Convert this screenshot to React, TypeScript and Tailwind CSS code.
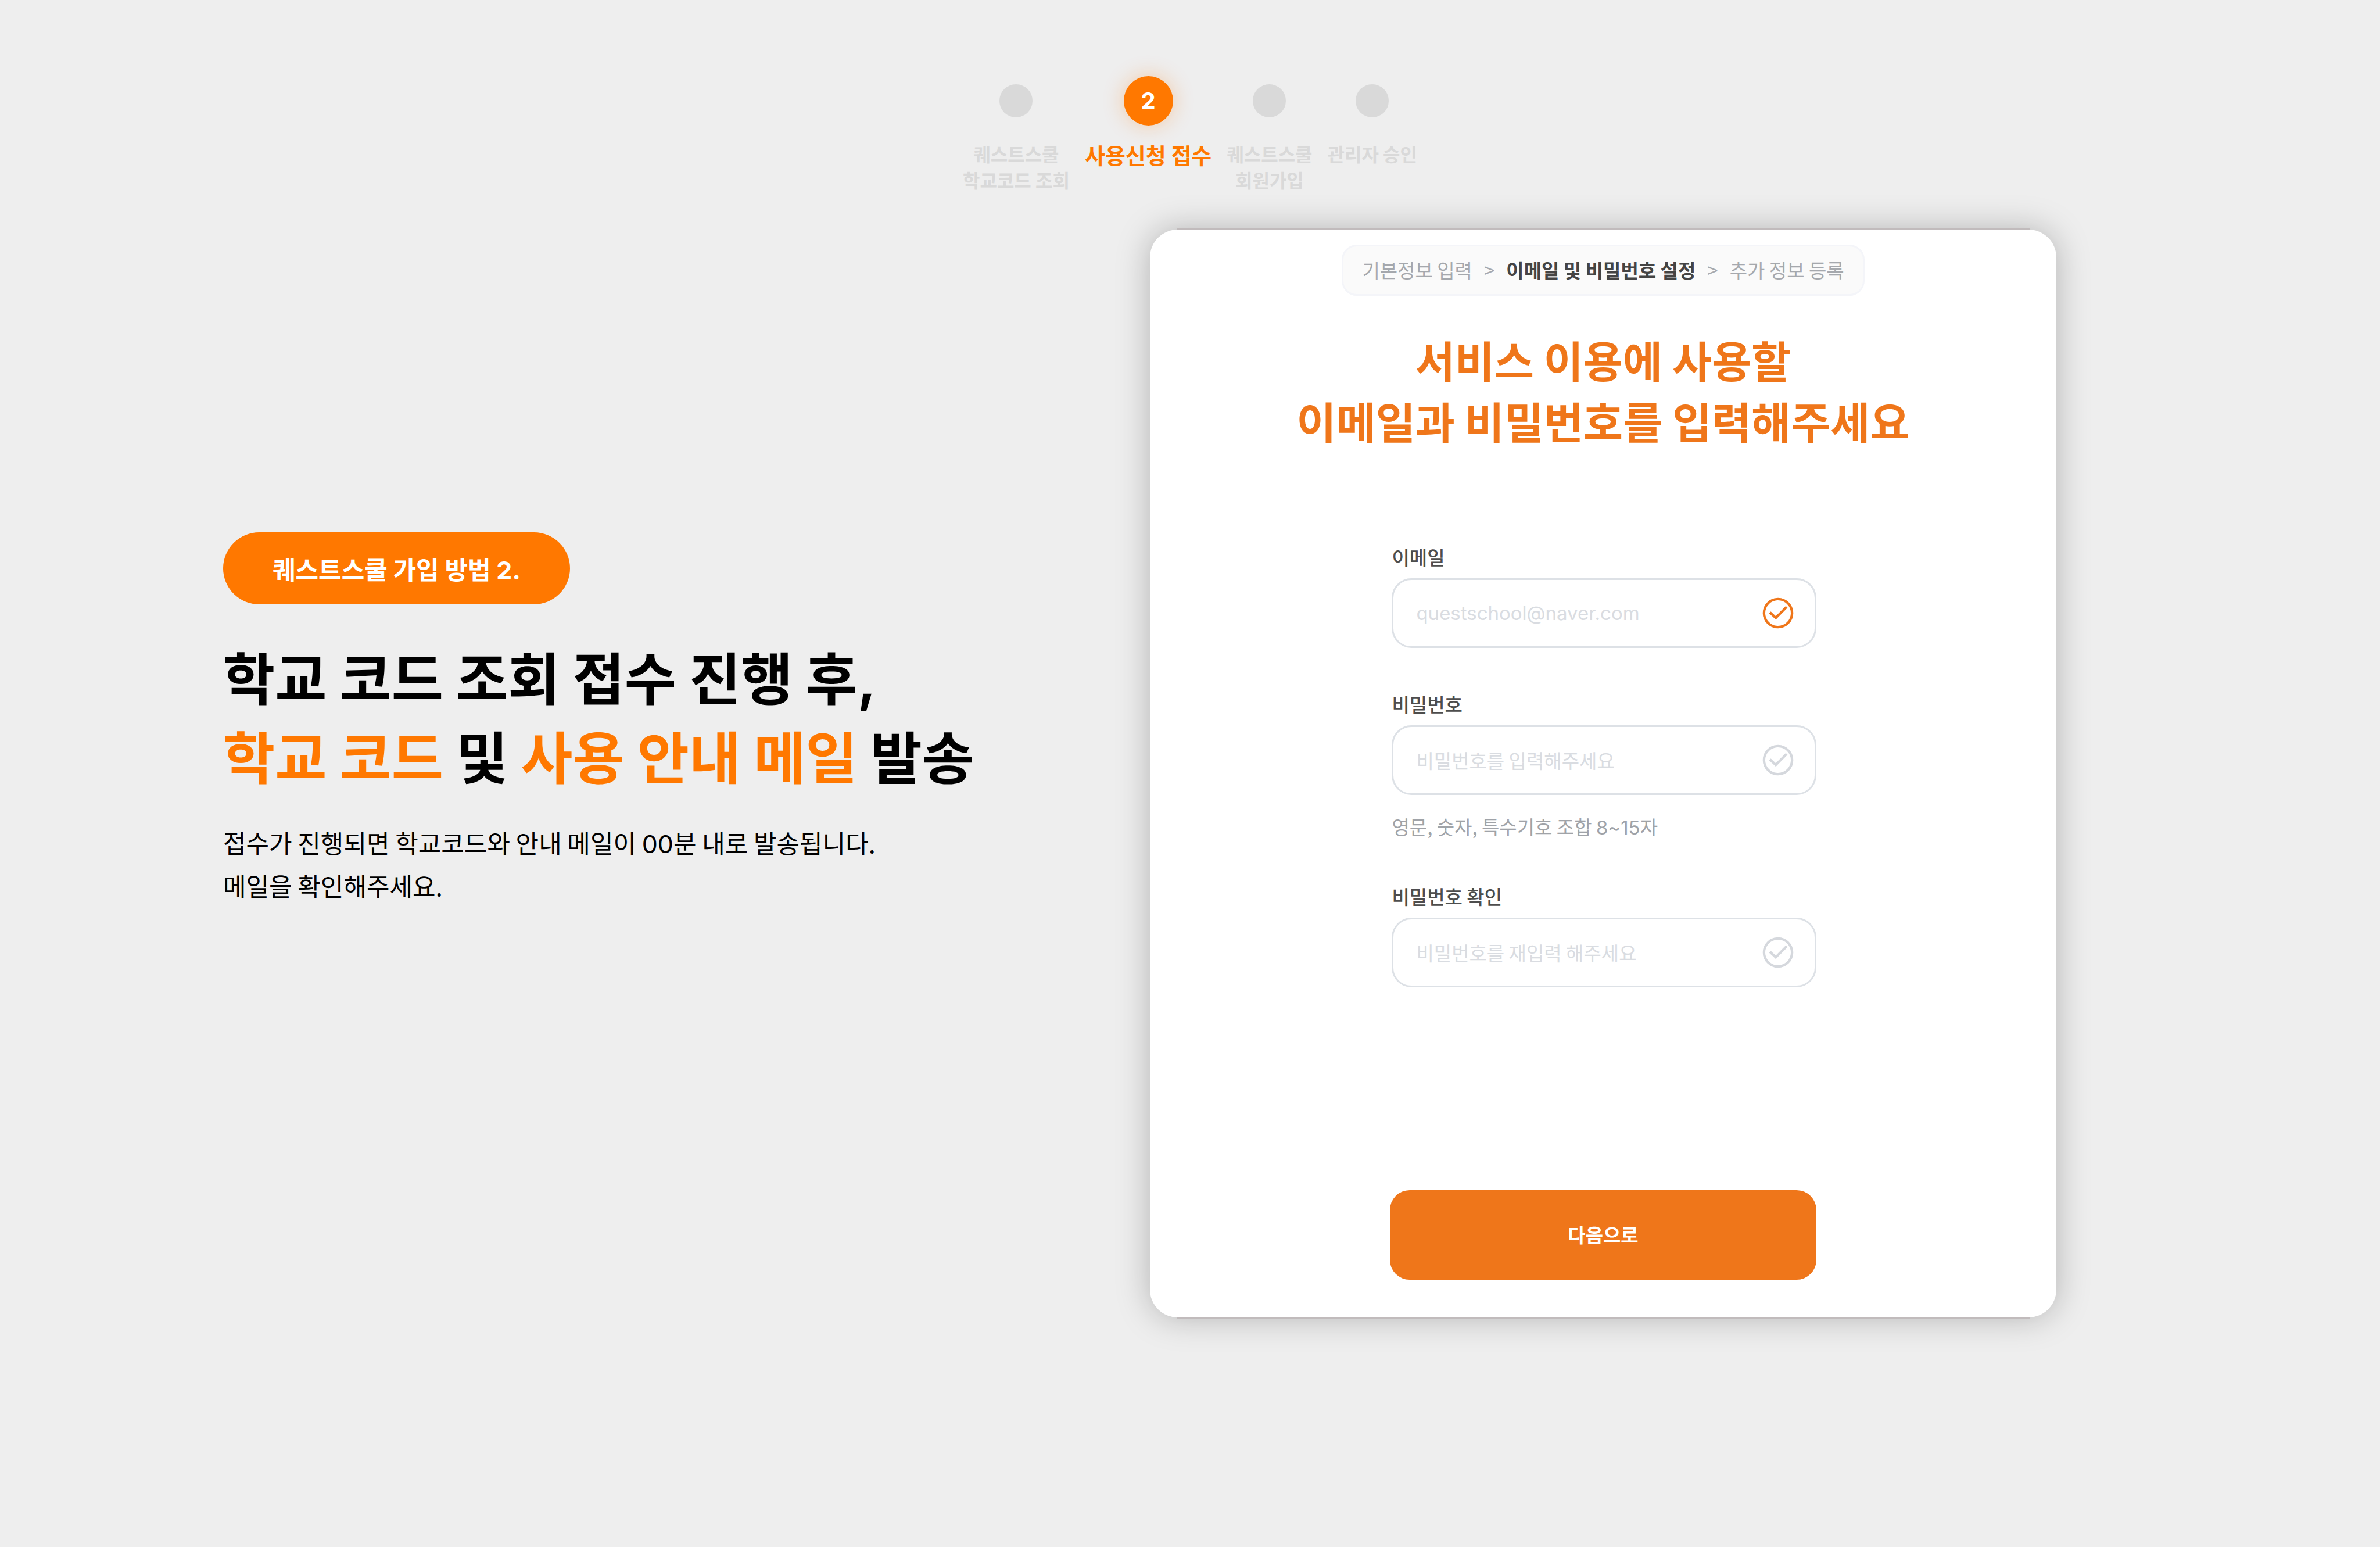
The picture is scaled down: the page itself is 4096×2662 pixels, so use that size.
import React from "react";

type Step = { lines: string[]; active?: boolean; number: number };

const steps: Step[] = [
  { number: 1, lines: ["퀘스트스쿨", "학교코드 조회"] },
  { number: 2, lines: ["사용신청 접수"], active: true },
  { number: 3, lines: ["퀘스트스쿨", "회원가입"] },
  { number: 4, lines: ["관리자 승인"] },
];

type FieldProps = {
  id: string;
  label: string;
  type: string;
  placeholder: string;
  hint?: React.ReactNode;
  valid?: boolean;
};

function Latin({ children }: { children: React.ReactNode }) {
  return <span className="font-['Inter'] leading-none">{children}</span>;
}

const fields: FieldProps[] = [
  { id: "email", label: "이메일", type: "email", placeholder: "questschool@naver.com", valid: true },
  {
    id: "password",
    label: "비밀번호",
    type: "password",
    placeholder: "비밀번호를 입력해주세요",
    hint: (
      <>
        영문, 숫자, 특수기호 조합 <Latin>8~15</Latin>자
      </>
    ),
  },
  { id: "password-confirm", label: "비밀번호 확인", type: "password", placeholder: "비밀번호를 재입력 해주세요" },
];

function StepItem({ step }: { step: Step }) {
  return (
    <li className="flex flex-col items-center gap-[26px]" aria-current={step.active ? "step" : undefined}>
      <div className="flex h-[85px] items-center justify-center">
        {step.active ? (
          <span className="flex size-[85px] items-center justify-center rounded-full bg-[#ff7800] font-['Inter'] text-[40px] font-bold text-white shadow-[0_0_36px_rgba(255,120,0,0.3)]">
            {step.number}
          </span>
        ) : (
          <span className="size-[57px] rounded-full bg-[#d9d9d9]" />
        )}
      </div>
      <p
        className={
          step.active
            ? "text-center text-[38px] leading-[48px] font-bold text-[#ff7800]"
            : "text-center text-[32px] leading-[45px] font-bold text-[#d9d9d9]"
        }
      >
        {step.lines.map((line) => (
          <span key={line} className="block whitespace-nowrap">
            {line}
          </span>
        ))}
      </p>
    </li>
  );
}

function CheckCircle({ className }: { className: string }) {
  return (
    <svg viewBox="0 0 76 76" fill="none" stroke="currentColor" strokeWidth="6" className={className} aria-hidden="true">
      <circle cx="38" cy="38" r="34" />
      <path d="M18.5 36.5 L32.5 49.5 L59 23" />
    </svg>
  );
}

function Field({ id, label, type, placeholder, hint, valid }: FieldProps) {
  return (
    <div className="flex flex-col">
      <label htmlFor={id} className="text-[33px] leading-[48px] font-medium text-[#4d4d4d]">
        {label}
      </label>
      <div className="relative mt-[13px]">
        <input
          id={id}
          type={type}
          placeholder={placeholder}
          className={
            type === "email"
              ? "h-[120px] w-full rounded-[34px] border-3 border-[#dde1e6] bg-white pr-[120px] pl-[39px] font-['Inter'] text-[33px] text-[#444444] outline-none placeholder:text-[#d9dce1]"
              : "h-[120px] w-full rounded-[34px] border-3 border-[#dde1e6] bg-white pr-[120px] pl-[39px] text-[33px] text-[#444444] outline-none placeholder:text-[#d9dce1]"
          }
        />
        <CheckCircle
          className={
            valid
              ? "absolute top-[33px] right-[39px] size-[54px] text-[#ef761a]"
              : "absolute top-[33px] right-[39px] size-[54px] text-[#d5d8dd]"
          }
        />
      </div>
      {hint && <p className="mt-[30px] text-[33px] leading-[48px] text-[#a0a3a8]">{hint}</p>}
    </div>
  );
}

export default function App() {
  return (
    <div className="flex min-h-screen flex-col bg-[#eeeeee] pt-[131px] font-['Noto_Sans_CJK_KR',sans-serif]">
      <ol className="flex justify-center gap-[26px]">
        {steps.map((step) => (
          <StepItem key={step.number} step={step} />
        ))}
      </ol>

      <main className="mt-[63px] grid grid-cols-[1595fr_1560fr] pr-[557px] pl-96">
        <section className="flex flex-col items-start pt-[521px]">
          <span className="rounded-full bg-[#ff7800] px-[85px] text-[43px] leading-[124px] font-bold whitespace-nowrap text-white">
            퀘스트스쿨 가입 방법 <Latin>2.</Latin>
          </span>
          <h1 className="mt-[54px] text-[97px] leading-[136px] font-bold whitespace-nowrap text-black">
            학교 코드 조회 접수 진행 후<Latin>,</Latin>
            <br />
            <span className="text-[#ff7800]">학교 코드</span> 및 <span className="text-[#ff7800]">사용 안내 메일</span> 발송
          </h1>
          <p className="mt-[46px] text-[43px] leading-[74px] text-black">
            접수가 진행되면 학교코드와 안내 메일이 <Latin>00</Latin>분 내로 발송됩니다.
            <br />
            메일을 확인해주세요.
          </p>
        </section>

        <section className="relative flex flex-col items-center rounded-[48px] bg-white pt-[26px] pb-[65px] shadow-[0_0_57px_rgba(0,0,0,0.25)] before:absolute before:inset-x-[46px] before:-top-[3px] before:h-[3px] before:bg-[#c1bbbc] after:absolute after:inset-x-[46px] after:-bottom-[3px] after:h-[3px] after:bg-[#c1bbbc]">
          <nav className="flex h-[88px] items-center gap-5 rounded-[26px] border-3 border-[#f4f5f9] bg-[#fafafa] px-[32px] text-[33px] whitespace-nowrap text-[#a5a8ad]">
            <span>기본정보 입력</span>
            <span>&gt;</span>
            <span className="font-bold text-[#444444]" aria-current="step">
              이메일 및 비밀번호 설정
            </span>
            <span>&gt;</span>
            <span>추가 정보 등록</span>
          </nav>

          <h2 className="mt-[56px] text-center text-[74px] leading-[105px] font-bold text-[#ef761a]">
            서비스 이용에 사용할
            <br />
            이메일과 비밀번호를 입력해주세요
          </h2>

          <form className="mt-[159px] flex w-[47%] flex-col" onSubmit={(event) => event.preventDefault()}>
            <div className="flex flex-col gap-[72px] pl-[3px]">
              {fields.map((field) => (
                <Field key={field.id} {...field} />
              ))}
            </div>
            <button
              type="submit"
              className="mt-[349px] h-[154px] w-full rounded-[34px] bg-[#ef761a] text-[33px] font-bold text-white"
            >
              다음으로
            </button>
          </form>
        </section>
      </main>
    </div>
  );
}
